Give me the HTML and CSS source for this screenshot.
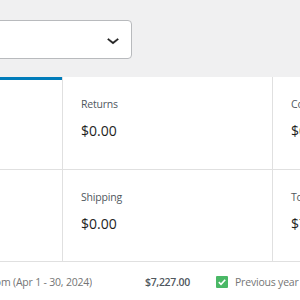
FILE: index.html
```html
<!DOCTYPE html>
<html lang="en">
<head>
    <meta charset="UTF-8">
    <meta name="viewport" content="width=device-width, initial-scale=1.0">
    <title>Revenue Summary</title>
    <link rel="stylesheet" href="styles.css">
</head>
<body>
    <div class="filter">
        <div class="select">
            <svg class="chevron" width="24" height="24" viewBox="0 0 24 24">
                <path d="M17.5 11.6L12 16l-5.5-4.4.9-1.2L12 14l4.6-3.6 1 1.2z"/>
            </svg>
        </div>
    </div>

    <div class="summary">
        <div class="item is-selected">
            <div class="label">Gross sales</div>
            <div class="value">$7,227.00</div>
        </div>
        <div class="item">
            <div class="label">Returns</div>
            <div class="value">$0.00</div>
        </div>
        <div class="item">
            <div class="label">Coupons</div>
            <div class="value">$0.00</div>
        </div>
        <div class="item">
            <div class="label">Net sales</div>
            <div class="value">$7,227.00</div>
        </div>
        <div class="item">
            <div class="label">Taxes</div>
            <div class="value">$0.00</div>
        </div>
        <div class="item">
            <div class="label">Shipping</div>
            <div class="value">$0.00</div>
        </div>
        <div class="item">
            <div class="label">Total sales</div>
            <div class="value">$7,227.00</div>
        </div>
        <div class="item empty"></div>
    </div>

    <div class="legend">
        <div class="legend-item first">
            <div class="legend-label">
                <span class="check"></span>
                <span class="legend-text">Custom (Apr 1 - 30, 2024)</span>
            </div>
            <span class="legend-total">$7,227.00</span>
        </div>
        <div class="legend-item">
            <span class="check">
                <svg width="12" height="12" viewBox="0 0 12 12">
                    <path d="M2.8 6.2l2.2 2.1 4.2-4.6" fill="none" stroke="#fff" stroke-width="1.6"/>
                </svg>
            </span>
            <span class="legend-text">Previous year (Apr 1 - 30, 2023)</span>
        </div>
    </div>
</body>
</html>
```

FILE: styles.css
```css
* {
    margin: 0;
    padding: 0;
    box-sizing: border-box;
}

body {
    background-color: #f0f0f1;
    color: #1e1e1e;
    font-family: "Open Sans", "Noto Sans", sans-serif;
    overflow: hidden;
    height: 300px;
}

.filter {
    padding-top: 20px;
}

.select {
    display: flex;
    align-items: center;
    justify-content: flex-end;
    width: 300px;
    height: 39px;
    margin-left: -168px;
    padding-right: 6px;
    background: #fff;
    border: 1px solid #b8babd;
    border-radius: 4px;
}

.chevron {
    fill: #1e1e1e;
    stroke: #1e1e1e;
    stroke-width: 0.4;
}

.summary {
    display: grid;
    grid-template-columns: repeat(4, 210px);
    grid-template-rows: 93px 92px;
    margin-top: 18px;
    margin-left: -147px;
    width: 840px;
    background: #fff;
}

.item {
    padding: 19px 18px 0;
    border-right: 1px solid #e0e0e0;
    border-bottom: 1px solid #e0e0e0;
}

.item.is-selected {
    box-shadow: inset 0 3px 0 #007cba;
}

.label {
    font-size: 10.5px;
    line-height: 16px;
    letter-spacing: -0.2px;
    color: #50575e;
    white-space: nowrap;
}

.value {
    margin-top: 9px;
    font-size: 14px;
    line-height: 20px;
    color: #1e1e1e;
    white-space: nowrap;
}

.legend {
    display: flex;
    align-items: center;
    height: 40px;
    background: #fff;
    font-size: 10.5px;
    letter-spacing: -0.2px;
    color: #757575;
    white-space: nowrap;
}

.legend-item {
    display: flex;
    flex-shrink: 0;
    align-items: center;
    gap: 7px;
}

.legend-item.first {
    width: 190px;
    gap: 0;
    margin-right: 26px;
}

.legend-label {
    display: flex;
    align-items: center;
    justify-content: flex-end;
    gap: 7px;
    flex: 0 0 92px;
    overflow: hidden;
}

.legend-total {
    margin-left: auto;
    font-weight: 600;
    letter-spacing: -0.3px;
    color: #50575e;
}

.check {
    display: flex;
    flex: 0 0 12px;
    width: 12px;
    height: 12px;
    background: #4ab866;
    border-radius: 1px;
}
```
